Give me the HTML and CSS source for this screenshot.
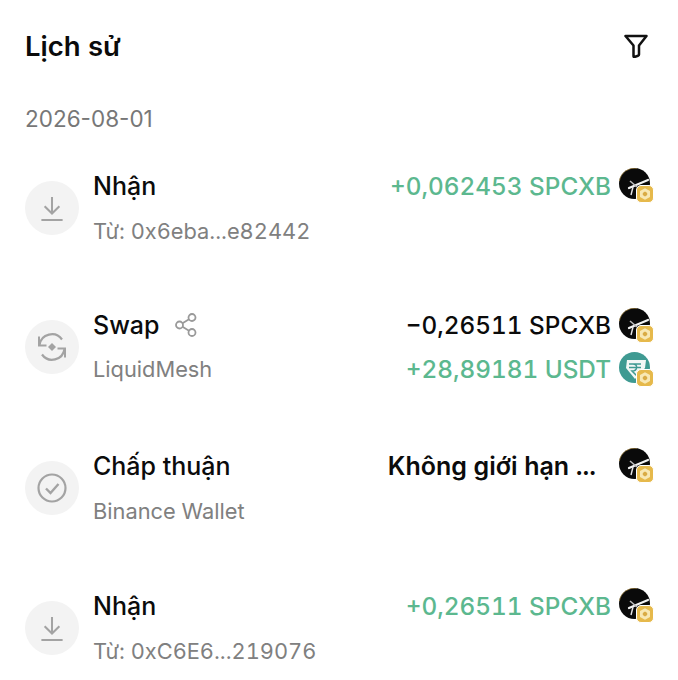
FILE: index.html
```html
<!DOCTYPE html>
<html lang="vi">
<head>
<meta charset="utf-8">
<title>Lịch sử</title>
<link rel="stylesheet" href="styles.css">
</head>
<body>
<svg class="defs" width="0" height="0" aria-hidden="true">
  <defs>
    <symbol id="badge" viewBox="0 0 18 18">
      <rect x="0.5" y="0.5" width="17" height="17" rx="4.500" fill="#e6b94b" stroke="#fff" stroke-width="1"/>
      <path d="M9 3.200 14 6.100V11.900L9 14.800 4 11.900V6.100Z" fill="#f8e8b4"/>
      <path d="M9 6.600 11.200 7.900V10.100L9 11.400 6.800 10.100V7.900Z" fill="#d9ab45"/>
    </symbol>
    <symbol id="spcxb" viewBox="0 0 35 35">
      <circle cx="15.500" cy="15.500" r="15.500" fill="#0a0a0a"/>
      <path d="M0.400 13A15.500 15.500 0 0 1 18 .2" fill="none" stroke="#c9a24a" stroke-width="0.800" opacity="0.700"/>
      <path d="M10 20 29 12" stroke="#f2f2f2" stroke-width="2.200" stroke-linecap="round"/>
      <path d="M11 13 18 19" stroke="#bbb" stroke-width="1.600"/>
      <path d="M12 27 14 19" stroke="#e6e6e6" stroke-width="1.400"/>
      <use href="#badge" x="17" y="17" width="18" height="18"/>
    </symbol>
    <symbol id="usdt" viewBox="0 0 35 35">
      <circle cx="15.500" cy="15.500" r="15.500" fill="#3f9a92"/>
      <path d="M8 8H27L26 16 16 27 7 16Z" fill="#f3f7f6"/>
      <path d="M10 12H22M10 15.500H22M14 12C19 12 19 19 13 19L18 24" fill="none" stroke="#3f9a92" stroke-width="1.500"/>
      <use href="#badge" x="17" y="17" width="18" height="18"/>
    </symbol>
  </defs>
</svg>
<main class="page">
  <header class="head">
    <h1 class="title">Lịch sử</h1>
    <svg class="filter" viewBox="0 0 24 24" width="24" height="24" fill="none" stroke="#111" stroke-width="2.500" stroke-linejoin="round">
      <path d="M1.500 2H22.500L15 11.500V20.500Q15 21.500 14 21.800L10.500 23Q9.500 23.200 9.500 22V11.500Z"/>
    </svg>
  </header>
  <div class="date">2026-08-01</div>

  <section class="row row-a">
    <div class="disc">
      <svg viewBox="0 0 26 28" width="24" height="27" fill="none" stroke="#a3a3a3" stroke-width="2.200">
        <path d="M13 1.500V19M5 11.500 13 19.500 21 11.500M1.500 26.500H24.500"/>
      </svg>
    </div>
    <div class="cols">
      <div class="line">
        <span class="name">Nhận</span>
        <span class="amt up">+0,062453 SPCXB</span>
        <svg class="token"><use href="#spcxb"/></svg>
      </div>
      <div class="line sub">
        <span class="from">Từ: 0x6eba...e82442</span>
      </div>
    </div>
  </section>

  <section class="row row-b">
    <div class="disc">
      <svg viewBox="0 0 30 30" width="30" height="30" fill="none" stroke="#a3a3a3" stroke-width="2.200">
        <path d="M2.500 13A12.500 12.500 0 0 1 25 7.500M27.500 17A12.500 12.500 0 0 1 5 22.500"/>
        <path d="M2 4.500V13.500H9.500M28 25.500V16.500H20.500" stroke-width="2"/>
        <path d="M15 11 19 15 15 19 11 15Z" fill="#a3a3a3" stroke="none"/>
      </svg>
    </div>
    <div class="cols">
      <div class="line">
        <span class="name">Swap</span>
        <svg class="share" viewBox="0 0 24 24" width="24" height="24" fill="none" stroke="#9a9a9a" stroke-width="1.800">
          <circle cx="5.500" cy="12" r="3.500"/><circle cx="18" cy="4.500" r="3.500"/><circle cx="18" cy="19.500" r="3.500"/>
          <path d="M8.500 10.200 15 6.300M8.500 13.800 15 17.700"/>
        </svg>
        <span class="amt">−0,26511 SPCXB</span>
        <svg class="token"><use href="#spcxb"/></svg>
      </div>
      <div class="line sub">
        <span class="from">LiquidMesh</span>
        <span class="amt up">+28,89181 USDT</span>
        <svg class="token"><use href="#usdt"/></svg>
      </div>
    </div>
  </section>

  <section class="row row-c">
    <div class="disc">
      <svg viewBox="0 0 30 30" width="30" height="30" fill="none" stroke="#a3a3a3" stroke-width="2.200">
        <circle cx="15" cy="15" r="13.500"/>
        <path d="M9 15.500 13.500 20 21.500 11" stroke-width="2.400"/>
      </svg>
    </div>
    <div class="cols">
      <div class="line">
        <span class="name">Chấp thuận</span>
        <span class="amt limit">Không giới hạn ...</span>
        <svg class="token"><use href="#spcxb"/></svg>
      </div>
      <div class="line sub">
        <span class="from">Binance Wallet</span>
      </div>
    </div>
  </section>

  <section class="row row-d">
    <div class="disc">
      <svg viewBox="0 0 26 28" width="24" height="27" fill="none" stroke="#a3a3a3" stroke-width="2.200">
        <path d="M13 1.500V19M5 11.500 13 19.500 21 11.500M1.500 26.500H24.500"/>
      </svg>
    </div>
    <div class="cols">
      <div class="line">
        <span class="name">Nhận</span>
        <span class="amt up">+0,26511 SPCXB</span>
        <svg class="token"><use href="#spcxb"/></svg>
      </div>
      <div class="line sub">
        <span class="from">Từ: 0xC6E6...219076</span>
      </div>
    </div>
  </section>
</main>
</body>
</html>
```
FILE: styles.css
```css
* { box-sizing: border-box; }
html, body { margin: 0; padding: 0; background: #fff; }
body {
  width: 678px;
  height: 680px;
  overflow: hidden;
  font-family: "Inter", "Liberation Sans", sans-serif;
  font-variant-numeric: tabular-nums;
  color: #0b0b0b;
}
.defs { position: absolute; }
.page { padding: 27px 24px 0 25px; }
.head {
  display: flex;
  align-items: center;
  justify-content: space-between;
  height: 38px;
  padding-right: 6px;
}
.title { margin: 0; font-size: 27.500px; font-weight: 600; line-height: 38px; }
.date {
  margin-top: 40px;
  font-size: 22.500px;
  line-height: 28px;
  color: #777;
  font-variant-numeric: normal;
}
.row { display: flex; align-items: center; gap: 14px; height: 90px; margin-top: 50px; }
.row-a { margin-top: 30px; }
.row-b { margin-top: 49px; }
.row-c { margin-top: 51px; }
.disc {
  flex: none;
  width: 54px;
  height: 54px;
  border-radius: 50%;
  background: #f3f3f3;
  display: flex;
  align-items: center;
  justify-content: center;
}
.cols { flex: 1; display: flex; flex-direction: column; gap: 9px; }
.row-b .cols { gap: 8px; }
.line { display: flex; align-items: center; height: 36px; }
.name { font-size: 25px; font-weight: 500; }
.share { margin-left: 14px; }
.amt { margin-left: auto; font-size: 24.300px; font-weight: 500; white-space: nowrap; }
.up { color: #5cb88f; }
.limit { font-size: 25px; font-weight: 600; margin-right: 15px; }
.from { font-size: 21.800px; color: #808080; }
.token { flex: none; width: 35px; height: 35px; margin-left: 8px; }
```
